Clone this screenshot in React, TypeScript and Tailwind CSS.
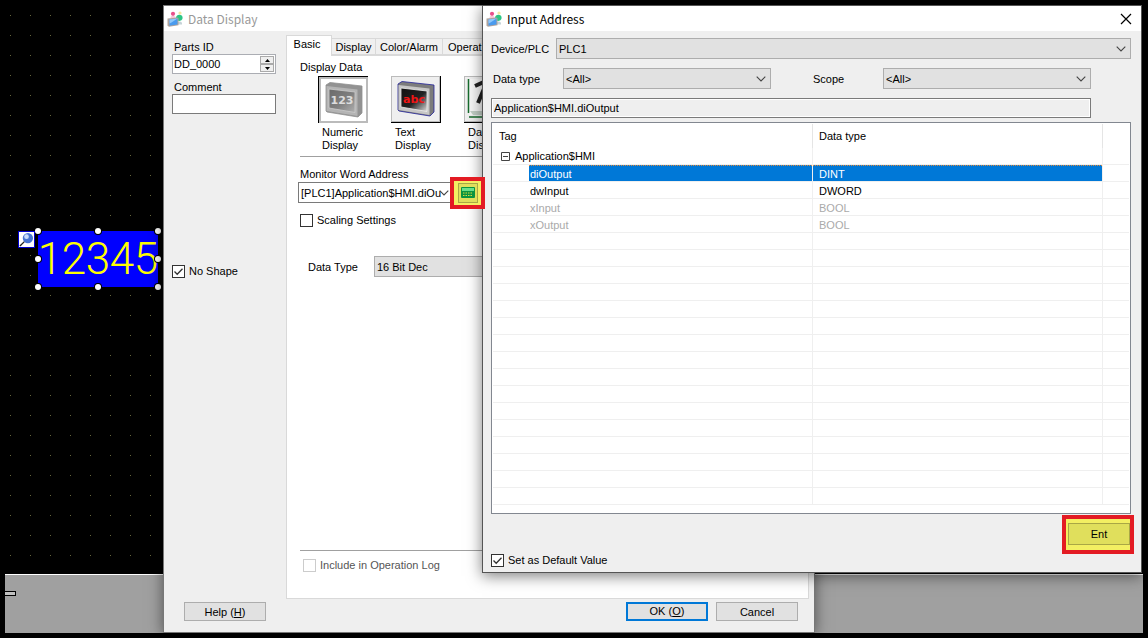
import type { ReactNode, SelectHTMLAttributes } from 'react';

function Chevron() {
  return (
    <svg viewBox="0 0 10 6" className="pointer-events-none absolute top-1/2 right-1 h-[6px] w-[10px] -translate-y-1/2" fill="none" stroke="#444" strokeWidth="1.1">
      <path d="M.7.7 5 5 9.3.7" />
    </svg>
  );
}

type DropProps = SelectHTMLAttributes<HTMLSelectElement> & { options: string[]; box: string };

function Drop({ options, box, ...rest }: DropProps) {
  return (
    <div className={`relative ${box}`}>
      <select {...rest} className="block h-full w-full appearance-none overflow-hidden pl-[2px] text-clip outline-none">
        {options.map((o) => (
          <option key={o}>{o}</option>
        ))}
      </select>
      <Chevron />
    </div>
  );
}

function Tick({ label, checked = false, disabled = false }: { label: string; checked?: boolean; disabled?: boolean }) {
  return (
    <label className={`flex items-center gap-1 ${disabled ? 'text-[#555]' : ''}`}>
      <span className="relative inline-grid shrink-0">
        <input
          type="checkbox"
          defaultChecked={checked}
          disabled={disabled}
          className="peer h-[13px] w-[13px] appearance-none border border-[#333] bg-white disabled:border-[#ccc]"
        />
        <svg viewBox="0 0 13 13" className="pointer-events-none absolute inset-0 hidden h-[13px] w-[13px] peer-checked:block" fill="none" stroke="#333" strokeWidth="1.3">
          <path d="m2.5 6.5 2.7 2.8 5.3-5.6" />
        </svg>
      </span>
      {label}
    </label>
  );
}

function AppIcon() {
  return (
    <svg viewBox="0 0 16 16" className="h-4 w-4">
      <circle cx="6" cy="2.8" r="2.1" fill="#e8508c" />
      <path d="M3.500 7c0-3 4.500-3 5.500 0z" fill="#f6c6d8" />
      <circle cx="13" cy="2" r="1.600" fill="#f4e7a0" />
      <path d="M9 7c0-4 6-4 6.500-1 .5 3-2 4-4 4z" fill="#2cc585" />
      <path d="M10 12c1-2 4-2 5 0v1.500h-5z" fill="#c6d3d8" />
      <path d="m.5 7.500 10-1 1 .8v7l-9.500 1.500-1.500-1z" fill="#b0a39b" />
      <path d="m2.500 8.500 8-1v6l-8 1.200z" fill="#4a9bee" />
      <path d="m2.500 8.500 8-1-6 4-2 1z" fill="#8fc8fa" />
    </svg>
  );
}

function PanelIcon({ text, on }: { text: string; on?: boolean }) {
  return (
    <svg viewBox="0 0 38 36" className="h-9 w-[38px]">
      <defs>
        <linearGradient id={`scr-${text}`} x1="0" y1="0" x2="1" y2="1">
          <stop offset="0" stopColor={on ? '#6a6a6a' : '#111'} />
          <stop offset=".55" stopColor={on ? '#808080' : '#222'} />
          <stop offset="1" stopColor={on ? '#b0b0b0' : '#ddd'} />
        </linearGradient>
      </defs>
      <path d="m1 3 4-2.500 32 3.500v27l-4 4-31-5-1-1z" fill={on ? '#929292' : '#7c7c7c'} stroke={on ? '#909090' : '#23239b'} strokeWidth=".8" />
      <path d="m1.500 4 31 3.500v26.500l-31-5z" fill={on ? '#b4b4b4' : '#c6c6c6'} />
      <path d="m4 7 26 3v20.500l-26-4.500z" fill={`url(#scr-${text})`} stroke={on ? '#ccc' : '#eee'} strokeWidth=".8" />
      <text x="17" y="22" textAnchor="middle" fontFamily="DejaVu Sans" fontWeight="bold" fontSize="11" fill={on ? '#ddd' : '#f01515'}>
        {text}
      </text>
    </svg>
  );
}

function Kind({ icon, first, second, on }: { icon: ReactNode; first: string; second: string; on?: boolean }) {
  return (
    <button className="w-[50px] shrink-0 text-left leading-[13px]">
      <span className={`mb-[3px] flex h-[47px] w-[50px] border-black ${on ? 'border-t border-l bg-white' : 'border-r border-b bg-[#efefef]'}`}>
        <span className={`flex grow items-center justify-center overflow-hidden border-[#bbb] ${on ? 'border-2' : 'border'}`}>{icon}</span>
      </span>
      <span className="block pl-1">{first}</span>
      <span className="block pl-1">{second}</span>
    </button>
  );
}

function Handles() {
  const spots = [
    'top-0 left-0',
    'top-0 left-1/2',
    'top-0 left-full',
    'top-1/2 left-0',
    'top-1/2 left-full',
    'top-full left-0',
    'top-full left-1/2',
    'top-full left-full',
  ];
  return (
    <>
      {spots.map((s) => (
        <span key={s} className={`absolute h-[6px] w-[6px] -translate-x-1/2 -translate-y-1/2 rounded-full bg-white ring-1 ring-black ${s}`} />
      ))}
    </>
  );
}

function DesignCanvas() {
  return (
    <div className="flex min-h-screen flex-col pr-[5px] pb-[5px] pl-[5px]">
      <div className="relative grow">
        <svg className="absolute inset-0 h-full w-full">
          <pattern id="grid" width="20" height="20" patternUnits="userSpaceOnUse">
            <rect x="5" y="15" width="1" height="1" fill="#66663c" />
          </pattern>
          <rect width="100%" height="100%" fill="url(#grid)" />
        </svg>
        <div className="absolute top-[231px] left-[33px] flex h-14 w-[120px] bg-[#0000ff] text-[44px] leading-[56px] font-light text-[#ffff00] [font-family:Roboto,'Liberation_Sans',sans-serif]">
          {['1', '2', '3', '4', '5'].map((d) => (
            <span key={d} className="flex w-6 justify-center">
              {d}
            </span>
          ))}
          <Handles />
        </div>
        <svg viewBox="0 0 16 16" className="absolute top-[231px] left-[13px] h-[17px] w-[17px] border border-[#0000d0] bg-white">
          <path d="m1 15 5-5" stroke="#222" strokeWidth="1.500" />
          <circle cx="9.500" cy="6.500" r="5.500" fill="#4674d2" />
          <circle cx="8" cy="5" r="2.500" fill="#c9dcfa" />
        </svg>
      </div>
      <div className="h-[59px] border-t border-white bg-[#a0a0a0] pt-4">
        <div className="h-[5px] w-[11px] border border-l-0 border-black bg-[#c0c0c0]" />
      </div>
    </div>
  );
}

const plainButton = 'h-[19px] w-[82px] border border-[#adadad] bg-[#e1e1e1]';
const titleFont = "[font-family:'Noto_Sans_CJK_KR',sans-serif]";

function DataDisplay() {
  return (
    <section className="absolute top-[5px] left-[163px] flex h-[628px] w-[652px] flex-col border border-[#777] bg-[#efefef] shadow-[0_2px_14px_rgba(0,0,0,0.5)]">
      <header className={`flex h-[25px] shrink-0 items-center gap-[5px] bg-white pl-[3px] text-[12px] text-[#999] ${titleFont}`}>
        <AppIcon />
        <h1>Data Display</h1>
      </header>
      <div className="flex grow">
        <div className="flex w-[122px] shrink-0 flex-col pt-2.5 pr-[10px] pl-2">
          <label htmlFor="parts" className="pl-[2px] leading-[13px]">
            Parts ID
          </label>
          <div className="flex h-5 border border-[#abadb3] bg-white p-px">
            <input id="parts" defaultValue="DD_0000" className="w-0 grow outline-none" />
            <div className="flex w-[14px] flex-col">
              <button aria-label="Increase" className="flex flex-1 items-center justify-center border border-[#aaa] bg-[#efefef]">
                <svg viewBox="0 0 5 3" className="h-[3px] w-[5px]"><path d="M0 3 2.500 0 5 3z" /></svg>
              </button>
              <button aria-label="Decrease" className="flex flex-1 items-center justify-center border border-[#aaa] bg-[#efefef]">
                <svg viewBox="0 0 5 3" className="h-[3px] w-[5px]"><path d="M0 0h5L2.500 3z" /></svg>
              </button>
            </div>
          </div>
          <label htmlFor="comment" className="mt-[7px] pl-[2px] leading-[13px]">
            Comment
          </label>
          <input id="comment" className="h-5 border border-[#7a7a7a] bg-white px-1 outline-none" />
          <div className="mt-[149px]">
            <Tick label="No Shape" checked />
          </div>
        </div>
        <div className="flex grow flex-col pt-1 pr-[5px]">
          <nav className="flex h-5 items-end">
            <button className="z-10 -mb-px h-[21px] w-[46px] border border-b-0 border-[#d9d9d9] bg-white pr-1 pb-1">Basic</button>
            <button className="h-[17px] w-11 border border-l-0 border-[#d9d9d9] bg-[#f0f0f0]">Display</button>
            <button className="h-[17px] w-[67px] border border-l-0 border-[#d9d9d9] bg-[#f0f0f0]">Color/Alarm</button>
            <button className="h-[17px] w-10 overflow-hidden border border-x-0 border-[#d9d9d9] bg-[#f0f0f0] pl-[5px] text-left">Operati</button>
          </nav>
          <div className="flex h-[544px] flex-col border border-[#d9d9d9] bg-white pr-4 pl-[13px]">
            <h2 className="mt-[5px] leading-[13px]">Display Data</h2>
            <div className="mt-[2px] flex gap-[23px] border-b border-[#a0a0a0] pb-1 pl-[18px]">
              <Kind on first="Numeric" second="Display" icon={<PanelIcon text="123" on />} />
              <Kind first="Text" second="Display" icon={<PanelIcon text="abc" />} />
              <Kind
                first="Date"
                second="Display"
                icon={
                  <svg viewBox="0 0 44 43" className="h-[43px] w-11">
                    <path d="M2 1h38v36H2z" fill="#f7f7f7" />
                    <path d="M1.500 1v34M2 39h38" stroke="#176b2d" strokeWidth="1.500" />
                    <path d="M3 33h38v4H6z" fill="#c3cfc6" />
                    <path d="m8 8 9-4 2 2-8 19" fill="none" stroke="#222" strokeWidth="4" />
                  </svg>
                }
              />
            </div>
            <label htmlFor="monitor" className="mt-[11px] leading-[13px]">
              Monitor Word Address
            </label>
            <div className="mt-px -ml-[2px] flex h-[21px] items-center">
              <Drop id="monitor" options={['[PLC1]Application$HMI.diOu']} box="h-[21px] w-[156px] border border-[#7a7a7a] bg-white" />
              <button aria-label="Enter address" className="z-30 -ml-1 flex h-8 w-[35px] shrink-0 items-center justify-center border-4 border-[#e31b23] bg-[#f3ef62]">
                <span className="flex h-5 w-5 items-center justify-center border border-[#a9a745] bg-[#e0df5c]">
                  <svg viewBox="0 0 14 11" className="h-[11px] w-[14px]">
                    <rect width="14" height="11" rx="1" fill="#0a9440" />
                    <path d="M1 1h12v3H1z" fill="#69e08a" />
                    <path d="M2 6h10M2 8.500h10" stroke="#d8dc39" strokeDasharray="1.500 1" />
                  </svg>
                </span>
              </button>
            </div>
            <div className="mt-[9px]">
              <Tick label="Scaling Settings" />
            </div>
            <div className="mt-7 flex items-center gap-4 pl-2">
              <label htmlFor="bits">Data Type</label>
              <Drop id="bits" options={['16 Bit Dec']} box="h-[21px] w-[160px] border border-[#adadad] bg-[#e1e1e1]" />
            </div>
            <div className="mt-auto mb-[25px] border-t border-[#a0a0a0] pt-[6px] pl-[3px]">
              <Tick label="Include in Operation Log" disabled />
            </div>
          </div>
          <div className="h-[33px]" />
        </div>
      </div>
      <footer className="absolute right-[16px] bottom-[11px] left-5 flex gap-2">
        <button className={`${plainButton} mr-auto`}>
          Help (<u>H</u>)
        </button>
        <button className="h-[19px] w-[82px] border-2 border-[#0078d7] bg-[#e1e1e1] leading-[15px]">
          OK (<u>O</u>)
        </button>
        <button className={plainButton}>Cancel</button>
      </footer>
    </section>
  );
}

const tags = [
  { name: 'diOutput', type: 'DINT', look: 'border-t border-dotted border-[#e08a3c] bg-[#0078d7] text-white leading-4' },
  { name: 'dwInput', type: 'DWORD', look: 'leading-[18px]' },
  { name: 'xInput', type: 'BOOL', look: 'leading-[18px] text-[#aaa]' },
  { name: 'xOutput', type: 'BOOL', look: 'leading-[18px] text-[#aaa]' },
];
const blanks = Array.from({ length: 16 }, (_, i) => i);
const cell = 'border-r border-b border-[#efefef]';

function TagTable() {
  return (
    <div className="mt-1 h-[392px] overflow-hidden border border-[#828790] bg-white px-px pt-px">
      <table className="w-full table-fixed border-separate border-spacing-0">
        <colgroup>
          <col />
          <col className="w-[290px]" />
          <col className="w-[26px]" />
        </colgroup>
        <thead>
          <tr className="h-6 text-left">
            <th className="border-r border-[#e5e5e5] pl-[6px] font-normal">Tag</th>
            <th className="border-r border-[#e5e5e5] pl-[6px] font-normal">Data type</th>
            <th />
          </tr>
        </thead>
        <tbody>
          <tr className="h-[17px]">
            <td className={`${cell} p-0`}>
              <span className="flex items-center gap-[5px] pl-2 leading-4">
                <svg viewBox="0 0 9 9" className="h-[9px] w-[9px]" fill="none" stroke="#444">
                  <path d="M.5.5h8v8h-8zM2 4.500h5" />
                </svg>
                Application$HMI
              </span>
            </td>
            <td className={cell} />
            <td className="border-b border-[#efefef]" />
          </tr>
          {tags.map((t) => (
            <tr key={t.name} className="h-[17px]">
              <td className={`${cell} p-0 pl-9`}>
                <div className={`h-4 pl-px ${t.look}`}>{t.name}</div>
              </td>
              <td className={`${cell} p-0`}>
                <div className={`h-4 pl-[6px] ${t.look}`}>{t.type}</div>
              </td>
              <td className="border-b border-[#efefef]" />
            </tr>
          ))}
          {blanks.map((b) => (
            <tr key={b} className="h-[17px]">
              <td className={cell} />
              <td className={cell} />
              <td className="border-b border-[#efefef]" />
            </tr>
          ))}
        </tbody>
      </table>
    </div>
  );
}

const greyBox = 'border border-[#adadad] bg-[#e1e1e1]';

function InputAddress() {
  return (
    <section className="absolute top-[5px] left-[482px] z-20 w-[660px] border border-[#555] bg-[#efefef] shadow-[0_3px_14px_rgba(0,0,0,0.5)]">
      <header className={`flex h-[25px] items-center gap-[5px] bg-white pr-[9px] pl-[3px] text-[12px] ${titleFont}`}>
        <AppIcon />
        <h1 className="grow">Input Address</h1>
        <button aria-label="Close">
          <svg viewBox="0 0 12 12" className="h-3 w-3" stroke="#000" strokeWidth="1.200">
            <path d="m1 1 10 10M11 1 1 11" />
          </svg>
        </button>
      </header>
      <div className="pt-[7px] pr-[10px] pl-2">
        <div className="flex items-center gap-[6px]">
          <label htmlFor="device" className="w-[59px] whitespace-nowrap">Device/PLC</label>
          <Drop id="device" options={['PLC1']} box={`h-[21px] grow ${greyBox}`} />
        </div>
        <div className="mt-[9px] flex items-center pr-10">
          <label htmlFor="dtype" className="w-[72px] pl-[2px]">Data type</label>
          <Drop id="dtype" options={['<All>']} box={`h-[21px] flex-1 ${greyBox}`} />
          <label htmlFor="scope" className="ml-[42px] w-[70px]">Scope</label>
          <Drop id="scope" options={['<All>']} box={`h-[21px] flex-1 ${greyBox}`} />
        </div>
        <div className="mt-[9px] pr-10">
          <input aria-label="Address" readOnly value="Application$HMI.diOutput" className="block h-5 w-full border border-[#7a7a7a] bg-[#efefef] px-[2px] ring-1 ring-white outline-none ring-inset" />
        </div>
        <TagTable />
      </div>
      <div className="flex h-[58px] items-start justify-between pl-2">
        <div className="mt-[38px]">
          <Tick label="Set as Default Value" checked />
        </div>
        <button className="mt-[1px] mr-[7px] flex h-[39px] w-[72px] border-4 border-[#e31b23] bg-[#f3ef62] pt-1 pr-0 pb-[5px] pl-[2px]">
          <span className="flex grow items-center justify-center self-stretch border border-[#a9a745] bg-[#e0df5c]">Ent</span>
        </button>
      </div>
    </section>
  );
}

export default function App() {
  return (
    <main className="relative min-h-screen overflow-hidden bg-black text-[11px] leading-4 text-black [font-family:'Liberation_Sans',Arial,sans-serif]">
      <DesignCanvas />
      <DataDisplay />
      <InputAddress />
    </main>
  );
}
